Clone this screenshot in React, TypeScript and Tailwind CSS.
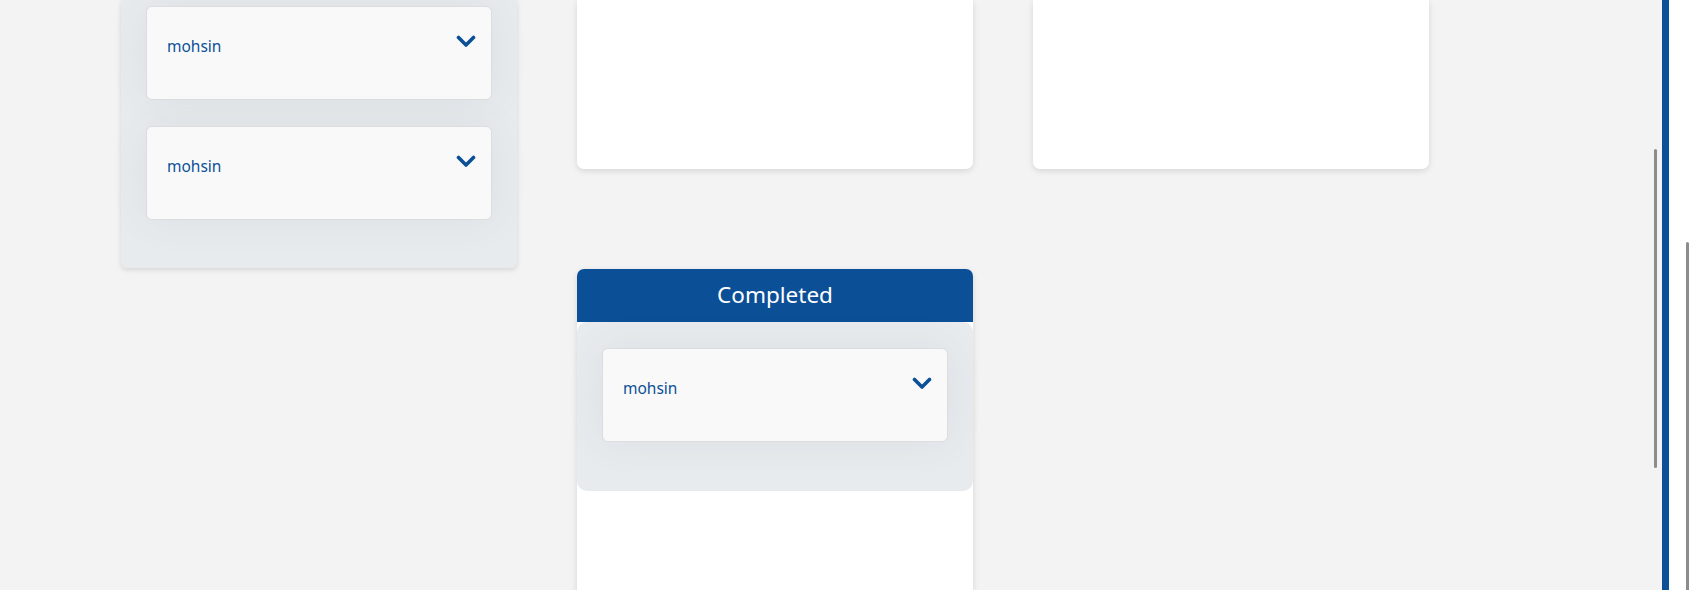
import React from "react";

/* ------------------------------------------------------------------ */
/*  Data                                                               */
/* ------------------------------------------------------------------ */

type Task = { id: number; name: string };

const pending: Task[] = [
  { id: 1, name: "mohsin" },
  { id: 2, name: "mohsin" },
];

const completed: Task[] = [{ id: 3, name: "mohsin" }];

const font = "font-['Segoe_UI','Noto_Sans',sans-serif]";

/* ------------------------------------------------------------------ */
/*  Icons                                                              */
/* ------------------------------------------------------------------ */

/** Bold chevron used on every task card */
function ChevronDown() {
  return (
    <svg width="20" height="13" viewBox="0 0 20 13" fill="none">
      <path
        d="M2.5 2.5L10 10L17.5 2.5"
        stroke="#0b5097"
        strokeWidth="3.6"
        strokeLinecap="round"
        strokeLinejoin="round"
      />
    </svg>
  );
}

/* ------------------------------------------------------------------ */
/*  Task card                                                          */
/* ------------------------------------------------------------------ */

function TaskCard({ task }: { task: Task }) {
  return (
    <div className="flex h-[94px] items-start justify-between rounded-[6px] border border-[#dcdddf] bg-[#f9f9f9] pl-5 pr-[15px] pt-[27px] shadow-[0_0_40px_rgba(60,70,90,0.07)]">
      <span className={`${font} text-[15.5px] leading-6 text-[#0b5097]`}>{task.name}</span>
      <button className="mt-[1px]" aria-label="Expand task">
        <ChevronDown />
      </button>
    </div>
  );
}

function TaskList({ tasks }: { tasks: Task[] }) {
  return (
    <div className="flex flex-col gap-[26px]">
      {tasks.map((t) => (
        <TaskCard key={t.id} task={t} />
      ))}
    </div>
  );
}

/* ------------------------------------------------------------------ */
/*  Page                                                               */
/* ------------------------------------------------------------------ */

export default function App() {
  return (
    <div className="flex h-[590px] w-full overflow-hidden bg-[#f3f3f3]">
      {/* Board */}
      <main className="relative flex-1 overflow-hidden">
        <div className="grid grid-cols-[396px_396px_396px] gap-x-[60px] gap-y-px pl-[121px]">
          {/* Column 1 (scrolled) */}
          <div className="rounded-b-[6px] bg-[#e8ebee] px-[25px] pb-[48px] pt-[6px] shadow-[0_2px_5px_rgba(0,0,0,0.12)]">
            <TaskList tasks={pending} />
          </div>

          {/* Column 2 */}
          <div className="h-[169px] self-start rounded-b-[7px] bg-white shadow-[0_2px_6px_rgba(0,0,0,0.12)]" />

          {/* Column 3 */}
          <div className="h-[169px] self-start rounded-b-[7px] bg-white shadow-[0_2px_6px_rgba(0,0,0,0.12)]" />

          {/* Completed */}
          <div className="col-start-2 h-[330px] rounded-t-[7px] bg-white shadow-[0_2px_6px_rgba(0,0,0,0.12)]">
            <div className="flex h-[53px] items-center justify-center rounded-t-[7px] bg-[#0b5097]">
              <h2 className={`${font} text-[22.5px] leading-none text-white`}>Completed</h2>
            </div>
            <div className="rounded-[10px] bg-[#e8ebee] px-[25px] pb-[49px] pt-[26px]">
              <TaskList tasks={completed} />
            </div>
          </div>
        </div>

        {/* Board scrollbar thumb */}
        <div className="absolute right-[5px] top-[149px] h-[319px] w-[3px] rounded-full bg-[#8c8c8c]" />
      </main>

      {/* Side rail */}
      <aside className="relative w-[30px] border-l-[7px] border-[#0b5097] bg-white">
        <div className="absolute right-[3px] top-[242px] h-[400px] w-[3px] rounded-full bg-[#8c8c8c]" />
      </aside>
    </div>
  );
}
